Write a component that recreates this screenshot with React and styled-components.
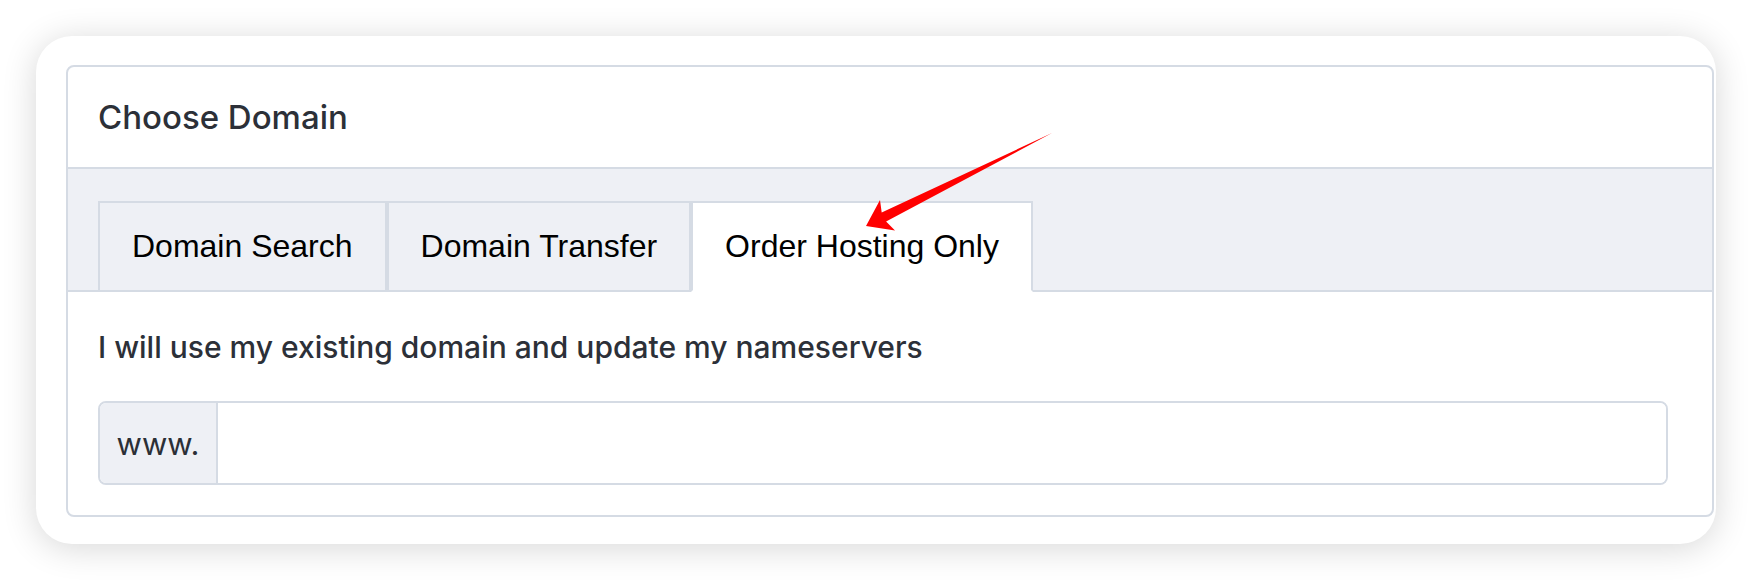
import styled, { createGlobalStyle } from "styled-components";

const GlobalStyle = createGlobalStyle`
  html, body {
    margin: 0;
    background: #ffffff;
  }
  * {
    box-sizing: border-box;
  }
`;

// 카드/탭 테두리 공통 색
const LINE = "#d5dbe4";
const SOFT = "#eef0f5";

const tabs = ["Domain Search", "Domain Transfer", "Order Hosting Only"];

const App = () => {
  return (
    <Page>
      <GlobalStyle />
      <Frame>
        <Card>
          <CardHeader>Choose Domain</CardHeader>

          <TabBar>
            {tabs.map((t, i) => (
              <Tab key={t} $active={i === 2}>
                {t}
              </Tab>
            ))}
          </TabBar>

          <CardBody>
            <Hint>I will use my existing domain and update my nameservers</Hint>
            <InputGroup>
              <Addon>www.</Addon>
              <DomainInput type="text" />
            </InputGroup>
          </CardBody>
        </Card>
      </Frame>

      {/* 탭을 가리키는 빨간 화살표 */}
      <Arrow width="1752" height="580" viewBox="0 0 1752 580">
        <polygon
          points="866,226 880,200 881.7,212.6 1052,133 886.1,221.6 895,230.5"
          fill="#ff0000"
        />
      </Arrow>
    </Page>
  );
};

const Page = styled.div`
  position: relative;
  width: 1752px;
  height: 580px;
  padding: 36px 36px 0 36px;
`;

const Frame = styled.div`
  width: 1680px;
  height: 508px;
  padding: 29px 2px 27px 30px;
  background: #ffffff;
  border-radius: 36px;
  box-shadow: 0 4px 34px rgba(0, 0, 0, 0.16);
  display: flex;
`;

const Card = styled.div`
  flex: 1;
  display: flex;
  flex-direction: column;
  border: 2px solid ${LINE};
  border-radius: 8px;
  background: #ffffff;
  overflow: hidden;
`;

const CardHeader = styled.div`
  height: 102px;
  padding: 0 30px;
  display: flex;
  align-items: center;
  border-bottom: 2px solid ${LINE};
  font-family: Inter, "Noto Sans", sans-serif;
  font-size: 33px;
  font-weight: 500;
  color: #2c3038;
`;

const TabBar = styled.div`
  display: flex;
  align-items: flex-end;
  padding: 32px 30px 0;
  background: ${SOFT};
  border-bottom: 2px solid ${LINE};
`;

const Tab = styled.div`
  height: 91px;
  margin-bottom: -2px;
  padding: 0 32px;
  display: flex;
  align-items: center;
  border: 2px solid ${LINE};
  border-bottom-color: ${(p) => (p.$active ? "#ffffff" : LINE)};
  background: ${(p) => (p.$active ? "#ffffff" : SOFT)};
  font-family: "Liberation Sans", Arial, sans-serif;
  font-size: 32px;
  color: #000000;
  white-space: nowrap;
`;

const CardBody = styled.div`
  padding: 31px 44px 30px 30px;
`;

const Hint = styled.div`
  line-height: 48px;
  margin-bottom: 30px;
  font-family: Inter, "Noto Sans", sans-serif;
  font-size: 30px;
  font-weight: 500;
  color: #2c3038;
`;

const InputGroup = styled.div`
  display: flex;
  height: 84px;
  border: 2px solid ${LINE};
  border-radius: 8px;
  overflow: hidden;
`;

const Addon = styled.div`
  width: 118px;
  display: flex;
  align-items: center;
  justify-content: center;
  background: ${SOFT};
  border-right: 2px solid ${LINE};
  font-family: Inter, "Noto Sans", sans-serif;
  font-size: 31px;
  color: #2b2f36;
`;

const DomainInput = styled.input`
  flex: 1;
  border: none;
  outline: none;
  background: #ffffff;
  font-size: 30px;
`;

const Arrow = styled.svg`
  position: absolute;
  left: 0;
  top: 0;
  pointer-events: none;
`;

export default App;
